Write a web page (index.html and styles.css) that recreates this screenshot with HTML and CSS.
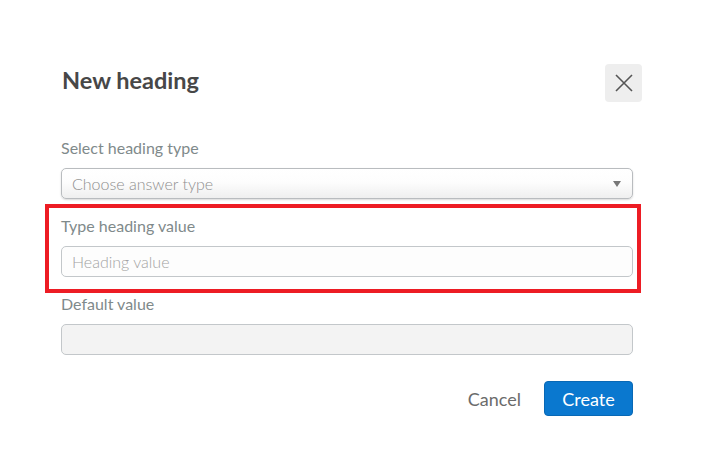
FILE: index.html
```html
<!DOCTYPE html>
<html lang="en">
<head>
    <meta charset="UTF-8">
    <meta name="viewport" content="width=device-width, initial-scale=1.0">
    <title>New heading</title>
    <link rel="stylesheet" href="styles.css">
</head>
<body>
    <div class="dialog">
        <div class="dialog-header">
            <h1>New heading</h1>
            <button class="close-btn" type="button" aria-label="Close">
                <svg width="18" height="18" viewBox="0 0 18 18">
                    <path d="M1 1 L17 17 M17 1 L1 17" stroke="#555" stroke-width="1.6" fill="none"/>
                </svg>
            </button>
        </div>

        <div class="field field-first">
            <label>Select heading type</label>
            <div class="select">
                <span>Choose answer type</span>
                <span class="caret"></span>
            </div>
        </div>

        <!-- highlighted field -->
        <div class="field">
            <label for="headingValue">Type heading value</label>
            <input type="text" id="headingValue" placeholder="Heading value">
        </div>

        <div class="field">
            <label for="defaultValue">Default value</label>
            <input type="text" id="defaultValue" disabled>
        </div>

        <div class="actions">
            <button class="cancel-btn" type="button">Cancel</button>
            <button class="create-btn" type="button">Create</button>
        </div>
    </div>

    <div class="highlight"></div>
</body>
</html>
```

FILE: styles.css
```css
* {
    margin: 0;
    padding: 0;
    box-sizing: border-box;
    font-family: 'Lato', 'Liberation Sans', sans-serif;
}

body {
    background: #fff;
    width: 713px;
    height: 461px;
    position: relative;
    overflow: hidden;
}

.dialog {
    padding: 64px 80px 0 61px;
}

.dialog-header {
    display: flex;
    justify-content: space-between;
    align-items: flex-start;
    height: 38px;
}

h1 {
    font-size: 23.5px;
    font-weight: bold;
    color: #474747;
    margin-top: 2px;
    margin-left: 1px;
}

.close-btn {
    width: 37px;
    height: 38px;
    margin-right: -9px;
    background: #eeeeee;
    border: none;
    border-radius: 4px;
    display: flex;
    align-items: center;
    justify-content: center;
    cursor: pointer;
}

.field {
    margin-top: 17px;
}

.field-first {
    margin-top: 36px;
}

label {
    display: block;
    font-size: 16px;
    line-height: 19px;
    color: #7f8a8b;
    margin-bottom: 11px;
}

.select {
    height: 31px;
    border: 1px solid #b9bcbf;
    border-radius: 5px;
    background: linear-gradient(#ffffff, #fdfdfd 45%, #efefef);
    box-shadow: 0 1px 2px rgba(0, 0, 0, 0.15);
    display: flex;
    align-items: center;
    justify-content: space-between;
    padding: 0 11px 0 10px;
    font-size: 16px;
    font-weight: 300;
    color: #8f8f8f;
}

.caret {
    width: 0;
    height: 0;
    border-left: 4px solid transparent;
    border-right: 4px solid transparent;
    border-top: 6px solid #777;
}

input {
    display: block;
    width: 100%;
    height: 31px;
    border: 1px solid #c3c7ca;
    border-radius: 5px;
    background: #fdfdfd;
    padding: 0 10px;
    font-size: 16px;
    font-weight: 300;
    color: #444;
}

input::placeholder {
    color: #a3a3a3;
}

input:disabled {
    background: #f3f3f3;
}

.actions {
    display: flex;
    justify-content: flex-end;
    align-items: center;
    gap: 23px;
    margin-top: 26px;
}

.cancel-btn {
    background: none;
    border: none;
    font-size: 18px;
    color: #6b6b6b;
    cursor: pointer;
}

.create-btn {
    width: 89px;
    height: 35px;
    background: #0a78cf;
    border: 1px solid #0868b5;
    border-radius: 4px;
    color: #fff;
    font-size: 18px;
    cursor: pointer;
}

/* annotation box over the second field */
.highlight {
    position: absolute;
    left: 45px;
    top: 204px;
    width: 596px;
    height: 89px;
    border: 4px solid #ed1c24;
    pointer-events: none;
}
```
